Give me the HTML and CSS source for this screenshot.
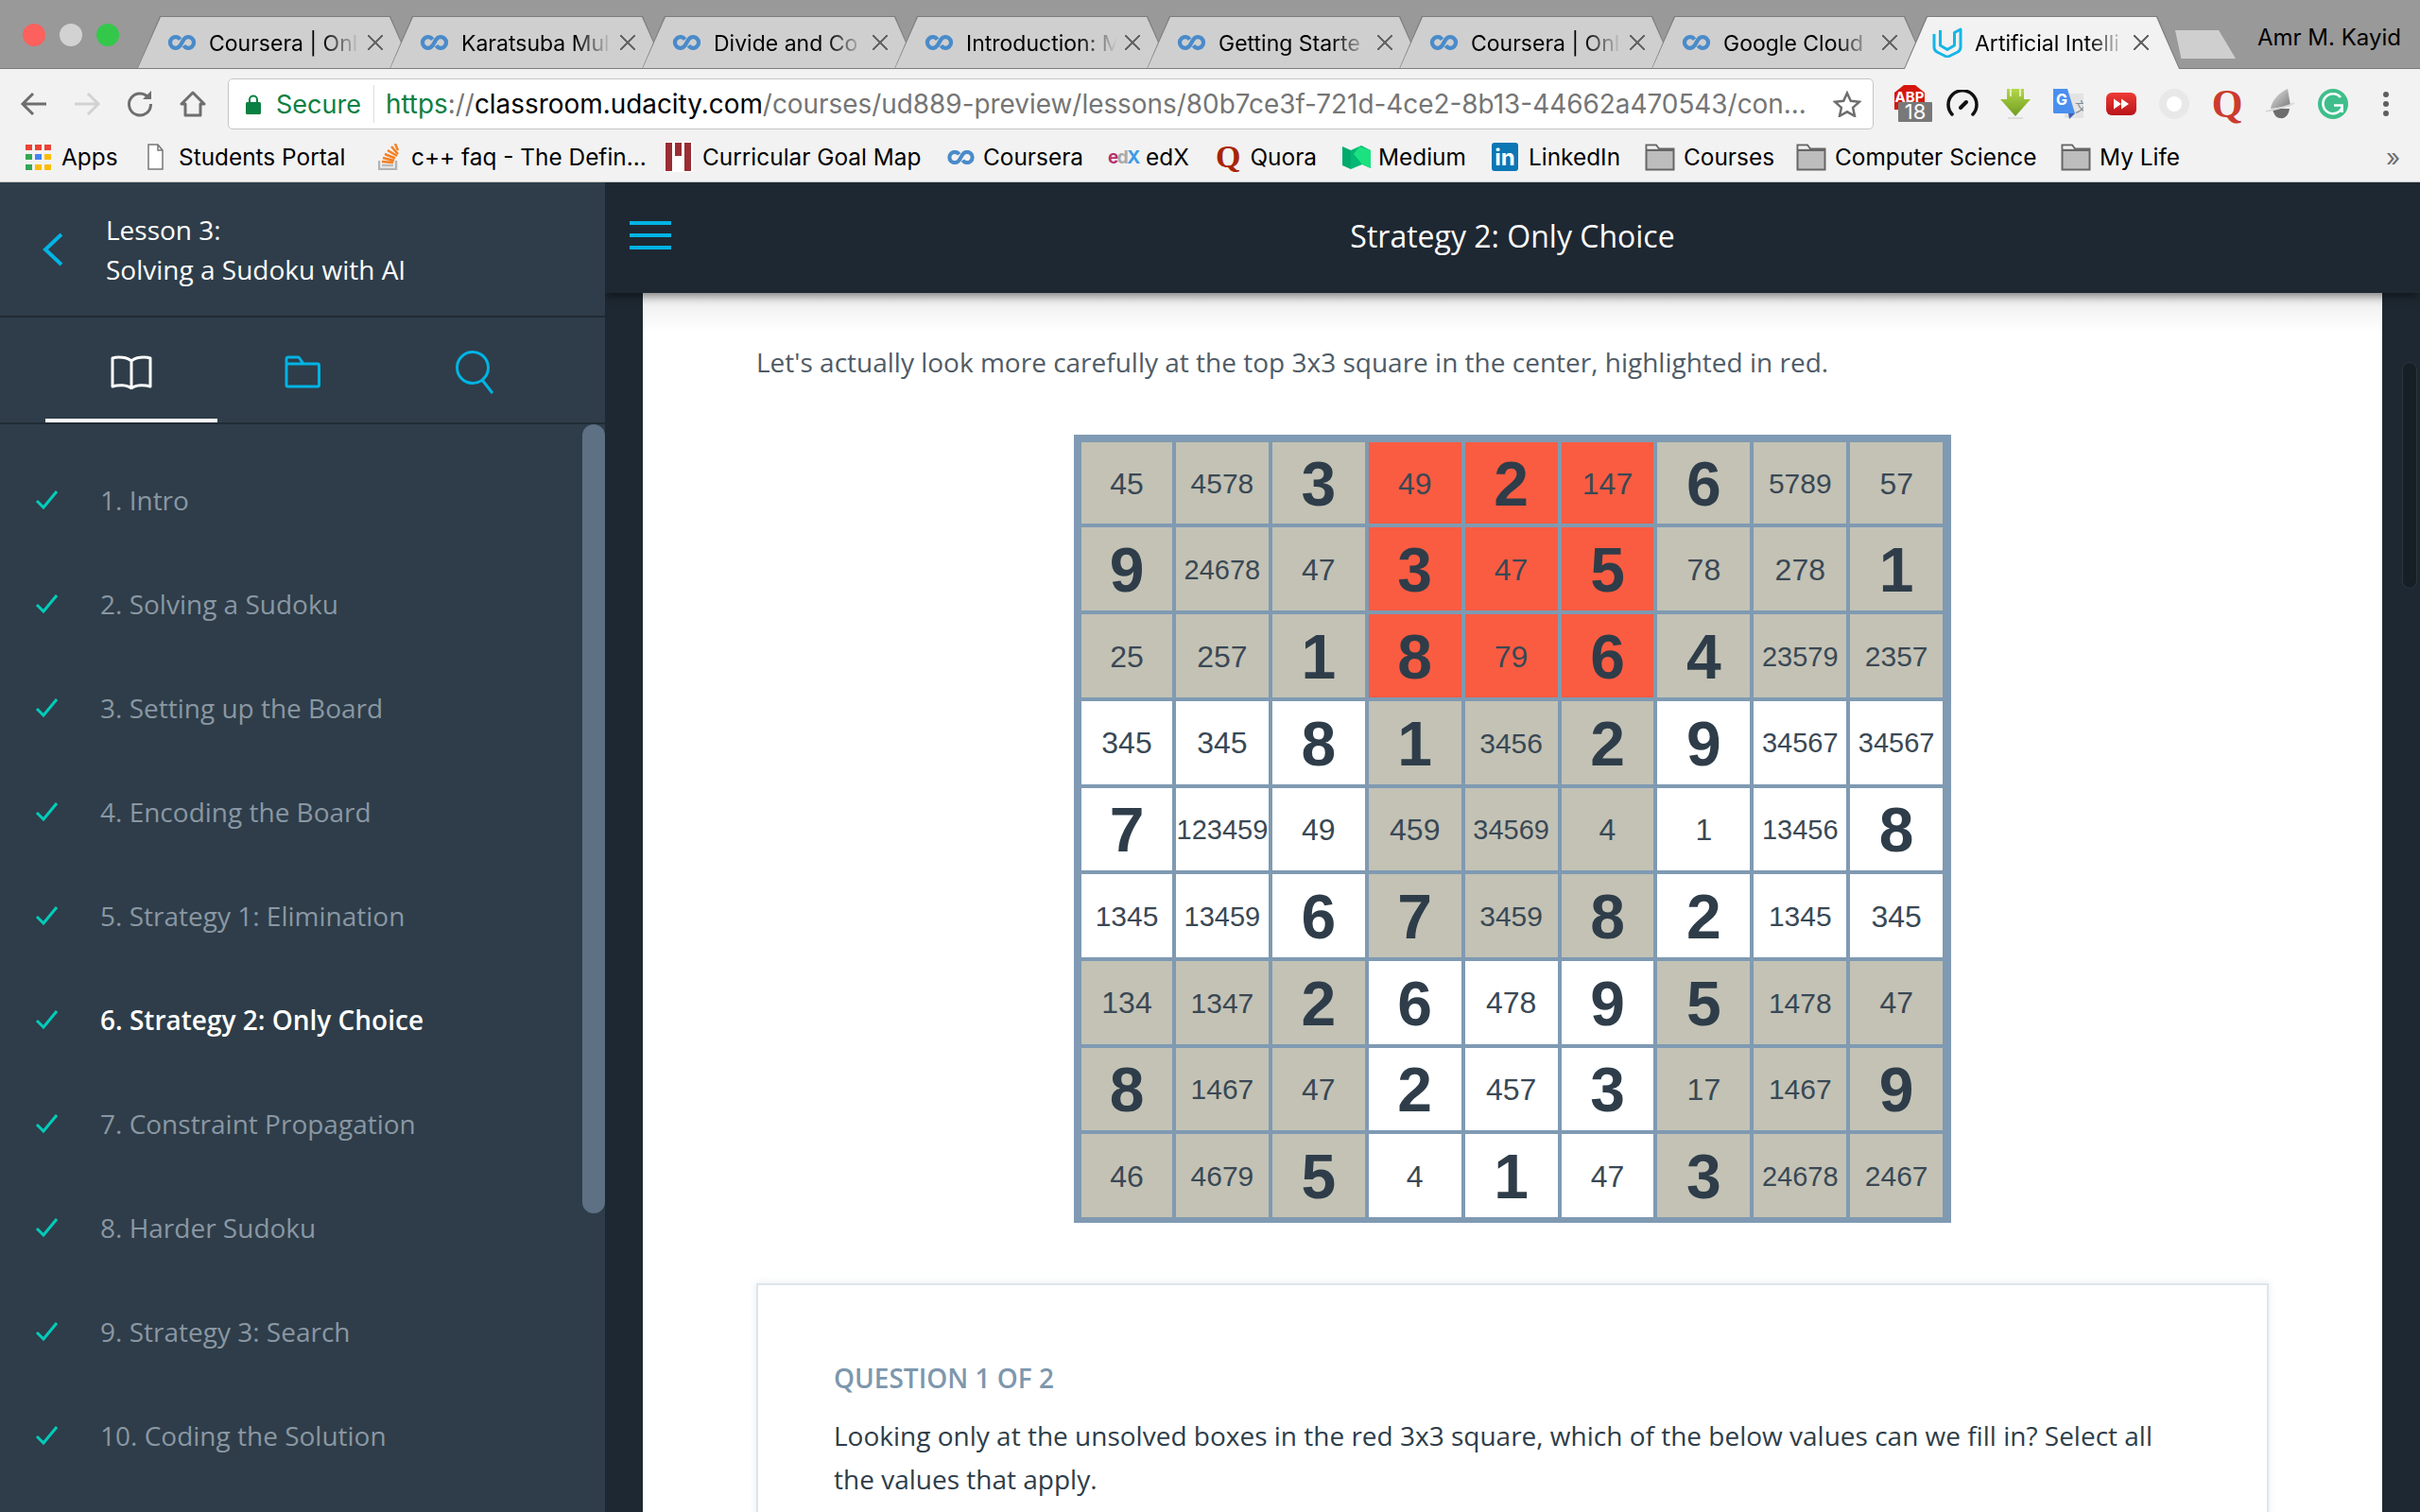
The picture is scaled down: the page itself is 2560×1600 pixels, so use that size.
FILE: index.html
```html
<!DOCTYPE html>
<html>

<head>
    <meta charset="utf-8">
    <title>Strategy 2: Only Choice</title>
    <link rel="stylesheet" href="styles.css">
</head>

<body>
    <svg class="defs" width="0" height="0">
        <symbol id="co" viewBox="0 0 32 16">
            <path d="M14 4.6A6 6 0 1 0 14 11.4L18 4.6A6 6 0 1 1 18 11.4" fill="none" stroke="#4a8bca" stroke-width="4.400"/>
        </symbol>
        <symbol id="bm-folder" viewBox="0 0 32 30">
            <path d="M1.5 28.5V2.5H12L15 6.5H30.500V28.5Z" fill="#bdbdbd" stroke="#666" stroke-width="2"/>
            <path d="M1.500 8H30.500" stroke="#666" stroke-width="2"/>
            <path d="M2.500 3.500H11.500L14 6.500H2.500Z" fill="#f2f2f2"/>
        </symbol>
    </svg>

    <div class="tabstrip">
        <div class="lights">
            <span class="light red"></span>
            <span class="light grey"></span>
            <span class="light green"></span>
        </div>
        <div class="tab"><svg class="tab-icon"><use href="#co"/></svg><span class="tab-title">Coursera | Onl</span><span class="tab-x"></span></div>
        <div class="tab"><svg class="tab-icon"><use href="#co"/></svg><span class="tab-title">Karatsuba Mul</span><span class="tab-x"></span></div>
        <div class="tab"><svg class="tab-icon"><use href="#co"/></svg><span class="tab-title">Divide and Co</span><span class="tab-x"></span></div>
        <div class="tab"><svg class="tab-icon"><use href="#co"/></svg><span class="tab-title">Introduction: M</span><span class="tab-x"></span></div>
        <div class="tab"><svg class="tab-icon"><use href="#co"/></svg><span class="tab-title">Getting Starte</span><span class="tab-x"></span></div>
        <div class="tab"><svg class="tab-icon"><use href="#co"/></svg><span class="tab-title">Coursera | Onl</span><span class="tab-x"></span></div>
        <div class="tab"><svg class="tab-icon"><use href="#co"/></svg><span class="tab-title">Google Cloud</span><span class="tab-x"></span></div>
        <div class="tab active">
            <svg class="tab-icon" viewBox="0 0 32 32">
                <path d="M2 7V21Q2 24 5 26L14 30.500Q16 31.500 18 30.500L27 26Q30 24 30 21V2L23.500 5.500V19L16 23.500L8.500 19V3" fill="none" stroke="#15b6e6" stroke-width="3" stroke-linejoin="round"/>
            </svg>
            <span class="tab-title">Artificial Intelli</span><span class="tab-x"></span>
        </div>
        <div class="new-tab"></div>
        <div class="profile">Amr M. Kayid</div>
    </div>

    <div class="toolbar">
        <div class="nav">
            <svg width="30" height="26" viewBox="0 0 30 26"><path d="M28 13H3M14 2L3 13L14 24" fill="none" stroke="#6e6e6e" stroke-width="3"/></svg>
        </div>
        <div class="nav">
            <svg width="30" height="26" viewBox="0 0 30 26"><path d="M2 13H27M16 2L27 13L16 24" fill="none" stroke="#d2d2d2" stroke-width="3"/></svg>
        </div>
        <div class="nav">
            <svg width="30" height="30" viewBox="0 0 30 30"><path d="M24.500 9A11.500 11.500 0 1 0 26.500 15" fill="none" stroke="#6e6e6e" stroke-width="3"/><path d="M18 10H27V1Z" fill="#6e6e6e"/></svg>
        </div>
        <div class="nav">
            <svg width="28" height="28" viewBox="0 0 28 28"><path d="M14 2L2 14H6V26H22V14H26Z" fill="none" stroke="#6e6e6e" stroke-width="3" stroke-linejoin="round"/></svg>
        </div>
        <div class="omnibox">
            <svg class="lock" width="16" height="21" viewBox="0 0 16 21"><path d="M4 9V5.500A4 4 0 0 1 12 5.500V9" fill="none" stroke="#0b8043" stroke-width="2"/><rect x="0" y="8" width="16" height="13" rx="1.500" fill="#0b8043"/></svg>
            <span class="secure">Secure</span>
            <span class="omni-sep"></span>
            <span class="url"><span class="u-green">https</span><span class="u-grey">://</span><span class="u-black">classroom.udacity.com</span><span class="u-grey">/courses/ud889-preview/lessons/80b7ce3f-721d-4ce2-8b13-44662a470543/con...</span></span>
            <svg class="star" width="30" height="28" viewBox="0 0 30 28"><path d="M15 2.500L18.800 10.800L27.800 11.800L21.100 17.900L23 26.800L15 22.300L7 26.800L8.900 17.900L2.200 11.800L11.200 10.800Z" fill="none" stroke="#6e6e6e" stroke-width="2.500"/></svg>
        </div>
        <div class="exts">
            <div class="ext">
                <svg width="48" height="40" viewBox="0 0 48 40">
                    <path d="M18 0H30L40 8V26H8V8Z" fill="#d5160e"/>
                    <text class="abp-text" x="24" y="18">ABP</text>
                    <rect x="12" y="18" width="36" height="21" rx="1" fill="#787878"/>
                    <text class="badge-text" x="30" y="36">18</text>
                </svg>
            </div>
            <div class="ext">
                <svg width="34" height="30" viewBox="0 0 34 30"><path d="M6 26A15 15 0 1 1 28 26" fill="none" stroke="#111" stroke-width="3.500" stroke-linecap="round"/><path d="M15 19L21 13" stroke="#111" stroke-width="4" stroke-linecap="round"/></svg>
            </div>
            <div class="ext">
                <svg width="32" height="32" viewBox="0 0 32 32">
                    <defs><linearGradient id="dl" x1="0" y1="0" x2="0" y2="1"><stop offset="0" stop-color="#b4d74c"/><stop offset="1" stop-color="#6f9c1f"/></linearGradient></defs>
                    <path d="M7 0H25V11H32L16 29L0 11H7Z" fill="url(#dl)"/>
                    <path d="M11 0V8M21 0V8" stroke="#e4efb8" stroke-width="2"/>
                    <path d="M8 31H24" stroke="#ddd" stroke-width="2"/>
                </svg>
            </div>
            <div class="ext">
                <svg width="32" height="32" viewBox="0 0 32 32">
                    <rect x="12" y="5" width="20" height="26" fill="#e3e3e3"/>
                    <text class="tr-text" x="23" y="24">文</text>
                    <path d="M0 0H15L23 26H1.500Q0 26 0 24.500Z" fill="#4a8fee"/>
                    <path d="M16 26H23L17 32Z" fill="#3f5fb8"/>
                    <text class="g-text" x="9" y="17">G</text>
                </svg>
            </div>
            <div class="ext">
                <svg width="32" height="24" viewBox="0 0 32 24">
                    <defs><linearGradient id="yt" x1="0" y1="0" x2="0" y2="1"><stop offset="0" stop-color="#ef3b36"/><stop offset="1" stop-color="#b9141a"/></linearGradient></defs>
                    <rect width="32" height="24" rx="6" fill="url(#yt)"/>
                    <path d="M8 6.500L16 12L8 17.500ZM16 6.500L24 12L16 17.500Z" fill="#fff"/>
                </svg>
            </div>
            <div class="ext">
                <svg width="32" height="32" viewBox="0 0 32 32"><circle cx="16" cy="16" r="16" fill="#e8e8e8"/><circle cx="16" cy="16" r="8" fill="#fff"/></svg>
            </div>
            <div class="ext"><span class="ext-q">Q</span></div>
            <div class="ext">
                <svg width="32" height="32" viewBox="0 0 32 32">
                    <defs><linearGradient id="cone" x1="0" y1="0" x2="1" y2="1"><stop offset="0" stop-color="#e6e6e6"/><stop offset="1" stop-color="#777"/></linearGradient></defs>
                    <path d="M24 0L27 18L6 21C7 12 15 4 24 0Z" fill="url(#cone)"/>
                    <path d="M8 21H26C25 28 21 32 16 31C12 31 9 27 8 21Z" fill="#6d6d6d"/>
                    <path d="M1 24C8 22 22 20 31 15" fill="none" stroke="#d8d8d8" stroke-width="2"/>
                </svg>
            </div>
            <div class="ext">
                <svg width="32" height="32" viewBox="0 0 32 32">
                    <circle cx="16" cy="16" r="16" fill="#3fbe8b"/>
                    <path d="M24 9A10.500 10.500 0 1 0 25.500 20" fill="none" stroke="#fff" stroke-width="2.600"/>
                    <path d="M17 17.500H25.500V25" fill="none" stroke="#fff" stroke-width="2.600"/>
                </svg>
            </div>
            <div class="ext">
                <svg width="8" height="28" viewBox="0 0 8 28"><circle cx="4" cy="4" r="3" fill="#5f5f5f"/><circle cx="4" cy="14" r="3" fill="#5f5f5f"/><circle cx="4" cy="24" r="3" fill="#5f5f5f"/></svg>
            </div>
        </div>
    </div>

    <div class="bookmarks">
        <div class="bm bm-apps">
            <svg class="bm-icon" width="27" height="27" viewBox="0 0 27 27">
                <rect width="7" height="6" fill="#ea4335"/><rect x="10" width="7" height="6" fill="#ea4335"/><rect x="20" width="7" height="6" fill="#ea4335"/>
                <rect y="10" width="7" height="6" fill="#34a853"/><rect x="10" y="10" width="7" height="6" fill="#4285f4"/><rect x="20" y="10" width="7" height="6" fill="#fbbc05"/>
                <rect y="21" width="7" height="6" fill="#34a853"/><rect x="10" y="21" width="7" height="6" fill="#fbbc05"/><rect x="20" y="21" width="7" height="6" fill="#fbbc05"/>
            </svg>Apps
        </div>
        <div class="bm bm-portal">
            <svg class="bm-icon" width="17" height="28" viewBox="0 0 17 28"><path d="M1 1H11L16 7V27H1ZM11 1V7H16" fill="#fff" stroke="#777" stroke-width="1.500"/></svg>Students Portal
        </div>
        <div class="bm bm-faq">
            <svg class="bm-icon" width="22" height="28" viewBox="0 0 22 28">
                <path d="M1 18V27H19V18" fill="none" stroke="#b3b3b3" stroke-width="2.500"/>
                <path d="M4 23H16" stroke="#bcbbbb" stroke-width="2.500"/>
                <path d="M4 19L16 20M5 15L17 18M7 11L18 15.500M10 7L20 13M14 3L21 11M18 0L21 7" stroke="#f48024" stroke-width="2.500"/>
            </svg>c++ faq - The Defin...
        </div>
        <div class="bm bm-goal">
            <svg class="bm-icon" width="30" height="32" viewBox="0 0 30 32"><rect width="30" height="32" fill="#fff"/><rect x="1" y="1" width="7" height="30" fill="#9a2e34"/><rect x="11" y="1" width="7" height="14" fill="#9a2e34"/><rect x="21" y="1" width="7" height="30" fill="#9a2e34"/></svg>Curricular Goal Map
        </div>
        <div class="bm bm-coursera">
            <svg class="bm-icon" width="31" height="15"><use href="#co"/></svg>Coursera
        </div>
        <div class="bm bm-edx">
            <span class="edx-icon"><span class="edx-e">e</span><span class="edx-d">d</span><span class="edx-x">X</span></span>edX
        </div>
        <div class="bm bm-quora">
            <span class="quora-q">Q</span>Quora
        </div>
        <div class="bm bm-medium">
            <svg class="bm-icon" width="30" height="25" viewBox="0 0 30 25"><path d="M0 1L9 5V25L0 21Z" fill="#00ab6c"/><path d="M9 5L20 0L30 5V24L21 20L9 25Z" fill="#02b875"/><path d="M18 1L30 5V24L21 20L12 9Z" fill="#1be27f"/></svg>Medium
        </div>
        <div class="bm bm-linkedin">
            <span class="in-icon">in</span>LinkedIn
        </div>
        <div class="bm bm-courses">
            <svg class="bm-icon" width="32" height="30"><use href="#bm-folder"/></svg>Courses
        </div>
        <div class="bm bm-cs">
            <svg class="bm-icon" width="32" height="30"><use href="#bm-folder"/></svg>Computer Science
        </div>
        <div class="bm bm-life">
            <svg class="bm-icon" width="32" height="30"><use href="#bm-folder"/></svg>My Life
        </div>
        <div class="bm-more">»</div>
    </div>

    <div class="app">
        <div class="sidebar">
            <div class="side-head">
                <svg class="back" width="22" height="36" viewBox="0 0 22 36"><path d="M20 2L3 18L20 34" fill="none" stroke="#02b3e4" stroke-width="4"/></svg>
                <div class="lesson">
                    <div>Lesson 3:</div>
                    <div>Solving a Sudoku with AI</div>
                </div>
            </div>
            <div class="side-tabs">
                <div class="side-tab on">
                    <svg width="44" height="36" viewBox="0 0 44 36"><path d="M22 6C18 2 8 1 2 3V33C8 31 18 31 22 35C26 31 36 31 42 33V3C36 1 26 2 22 6ZM22 6V35" fill="none" stroke="#fff" stroke-width="3" stroke-linejoin="round"/></svg>
                </div>
                <div class="side-tab">
                    <svg width="38" height="35" viewBox="0 0 38 35"><path d="M2 9V4Q2 2 4 2H15L20 9H35Q36.500 9 36.500 10.500V31.500Q36.500 33 35 33H3.500Q2 33 2 31.500ZM2 9H20" fill="none" stroke="#02b3e4" stroke-width="3" stroke-linejoin="round"/></svg>
                </div>
                <div class="side-tab">
                    <svg width="42" height="46" viewBox="0 0 42 46"><circle cx="19" cy="18" r="16.500" fill="none" stroke="#02b3e4" stroke-width="3"/><path d="M29 31L40 45" stroke="#02b3e4" stroke-width="3"/></svg>
                </div>
            </div>
            <div class="side-list">
                <div class="side-thumb"></div>
                <div class="item"><svg class="check" width="24" height="20" viewBox="0 0 24 20"><path d="M2 11L9 18L23 1" fill="none" stroke="#02ccba" stroke-width="3"/></svg>1. Intro</div>
                <div class="item"><svg class="check" width="24" height="20" viewBox="0 0 24 20"><path d="M2 11L9 18L23 1" fill="none" stroke="#02ccba" stroke-width="3"/></svg>2. Solving a Sudoku</div>
                <div class="item"><svg class="check" width="24" height="20" viewBox="0 0 24 20"><path d="M2 11L9 18L23 1" fill="none" stroke="#02ccba" stroke-width="3"/></svg>3. Setting up the Board</div>
                <div class="item"><svg class="check" width="24" height="20" viewBox="0 0 24 20"><path d="M2 11L9 18L23 1" fill="none" stroke="#02ccba" stroke-width="3"/></svg>4. Encoding the Board</div>
                <div class="item"><svg class="check" width="24" height="20" viewBox="0 0 24 20"><path d="M2 11L9 18L23 1" fill="none" stroke="#02ccba" stroke-width="3"/></svg>5. Strategy 1: Elimination</div>
                <div class="item current"><svg class="check" width="24" height="20" viewBox="0 0 24 20"><path d="M2 11L9 18L23 1" fill="none" stroke="#02ccba" stroke-width="3"/></svg>6. Strategy 2: Only Choice</div>
                <div class="item"><svg class="check" width="24" height="20" viewBox="0 0 24 20"><path d="M2 11L9 18L23 1" fill="none" stroke="#02ccba" stroke-width="3"/></svg>7. Constraint Propagation</div>
                <div class="item"><svg class="check" width="24" height="20" viewBox="0 0 24 20"><path d="M2 11L9 18L23 1" fill="none" stroke="#02ccba" stroke-width="3"/></svg>8. Harder Sudoku</div>
                <div class="item"><svg class="check" width="24" height="20" viewBox="0 0 24 20"><path d="M2 11L9 18L23 1" fill="none" stroke="#02ccba" stroke-width="3"/></svg>9. Strategy 3: Search</div>
                <div class="item"><svg class="check" width="24" height="20" viewBox="0 0 24 20"><path d="M2 11L9 18L23 1" fill="none" stroke="#02ccba" stroke-width="3"/></svg>10. Coding the Solution</div>
            </div>
        </div>

        <div class="main">
            <div class="topbar">
                <div class="burger"><span></span><span></span><span></span></div>
                <div class="top-title">Strategy 2: Only Choice</div>
            </div>
            <div class="page-thumb"></div>
            <div class="page">
                <p class="intro">Let's actually look more carefully at the top 3x3 square in the center, highlighted in red.</p>
                <div class="board">
                    <div class="cell tan">45</div><div class="cell tan n4">4578</div><div class="cell tan big">3</div><div class="cell red">49</div><div class="cell red big">2</div><div class="cell red">147</div><div class="cell tan big">6</div><div class="cell tan n4">5789</div><div class="cell tan">57</div>
                    <div class="cell tan big">9</div><div class="cell tan n5">24678</div><div class="cell tan">47</div><div class="cell red big">3</div><div class="cell red">47</div><div class="cell red big">5</div><div class="cell tan">78</div><div class="cell tan">278</div><div class="cell tan big">1</div>
                    <div class="cell tan">25</div><div class="cell tan">257</div><div class="cell tan big">1</div><div class="cell red big">8</div><div class="cell red">79</div><div class="cell red big">6</div><div class="cell tan big">4</div><div class="cell tan n5">23579</div><div class="cell tan n4">2357</div>
                    <div class="cell">345</div><div class="cell">345</div><div class="cell big">8</div><div class="cell tan big">1</div><div class="cell tan n4">3456</div><div class="cell tan big">2</div><div class="cell big">9</div><div class="cell n5">34567</div><div class="cell n5">34567</div>
                    <div class="cell big">7</div><div class="cell n5">123459</div><div class="cell">49</div><div class="cell tan">459</div><div class="cell tan n5">34569</div><div class="cell tan">4</div><div class="cell">1</div><div class="cell n5">13456</div><div class="cell big">8</div>
                    <div class="cell n4">1345</div><div class="cell n5">13459</div><div class="cell big">6</div><div class="cell tan big">7</div><div class="cell tan n4">3459</div><div class="cell tan big">8</div><div class="cell big">2</div><div class="cell n4">1345</div><div class="cell">345</div>
                    <div class="cell tan">134</div><div class="cell tan n4">1347</div><div class="cell tan big">2</div><div class="cell big">6</div><div class="cell">478</div><div class="cell big">9</div><div class="cell tan big">5</div><div class="cell tan n4">1478</div><div class="cell tan">47</div>
                    <div class="cell tan big">8</div><div class="cell tan n4">1467</div><div class="cell tan">47</div><div class="cell big">2</div><div class="cell">457</div><div class="cell big">3</div><div class="cell tan">17</div><div class="cell tan n4">1467</div><div class="cell tan big">9</div>
                    <div class="cell tan">46</div><div class="cell tan n4">4679</div><div class="cell tan big">5</div><div class="cell">4</div><div class="cell big">1</div><div class="cell">47</div><div class="cell tan big">3</div><div class="cell tan n5">24678</div><div class="cell tan n4">2467</div>
                </div>
                <div class="card">
                    <div class="q-label">QUESTION 1 OF 2</div>
                    <p class="q-text">Looking only at the unsolved boxes in the red 3x3 square, which of the below values can we fill in? Select all the values that apply.</p>
                </div>
            </div>
        </div>
    </div>
</body>

</html>
```

FILE: styles.css
```css
html, body {
    margin: 0;
    height: 1600px;
    overflow: hidden;
}
body {
    width: 2560px;
    font-family: Inter, 'Liberation Sans', Arial, sans-serif;
    background: #1e2832;
}
.defs {
    display: block;
    height: 0;
}

/* browser chrome */
.tabstrip {
    height: 72px;
    background: #999;
    border-bottom: 1px solid #7b7b7b;
    padding: 0 0 0 145px;
    display: flex;
    align-items: flex-end;
    position: relative;
}
.lights {
    position: absolute;
    left: 24px;
    top: 25px;
    display: flex;
    gap: 15px;
}
.light {
    width: 24px;
    height: 24px;
    border-radius: 50%;
}
.red { background: #fc615d; }
.light.grey { background: #d2d2d2; }
.green { background: #34c84a; }
.tab {
    position: relative;
    width: 292px;
    height: 56px;
    margin-right: -25px;
    margin-bottom: -1px;
    padding-left: 32px;
    box-sizing: border-box;
    display: flex;
    align-items: center;
    background: #7d7d7d;
    clip-path: polygon(0 100%, 24px 0, calc(100% - 24px) 0, 100% 100%);
}
.tab::before {
    content: "";
    position: absolute;
    left: 1px;
    right: 1px;
    top: 1px;
    bottom: 1px;
    background: #cfcfcf;
    clip-path: polygon(0 100%, 24px 0, calc(100% - 24px) 0, 100% 100%);
}
.tab > * {
    position: relative;
}
.tab.active {
    z-index: 2;
    padding-left: 30px;
}
.tab.active::before {
    background: #f2f2f2;
    bottom: 0;
}
.tab-icon {
    width: 31px;
    height: 16px;
    flex: none;
}
.active .tab-icon {
    width: 32px;
    height: 32px;
}
.tab-title {
    width: 166px;
    margin: 2px 0 0 13px;
    font-size: 23px;
    color: #000;
    white-space: nowrap;
    overflow: hidden;
    -webkit-mask-image: linear-gradient(to right, #000 72%, transparent 96%);
    mask-image: linear-gradient(to right, #000 72%, transparent 96%);
}
.tab-x {
    width: 16px;
    height: 16px;
    margin-left: 2px;
    background:
        linear-gradient(45deg, transparent 46%, #666 46%, #666 54%, transparent 54%),
        linear-gradient(-45deg, transparent 46%, #666 46%, #666 54%, transparent 54%);
}
.new-tab {
    width: 64px;
    height: 30px;
    margin: 0 0 10px 20px;
    background: #cfcfcf;
    clip-path: polygon(10% 100%, 0 0, 72% 0, 100% 100%);
}
.profile {
    position: absolute;
    left: 2388px;
    top: 25px;
    font-size: 24px;
    color: #000;
}

.toolbar {
    height: 66px;
    padding-top: 4px;
    background: #f2f2f2;
    padding-left: 8px;
    display: flex;
    align-items: center;
}
.nav {
    width: 56px;
    display: flex;
    justify-content: center;
}
.omnibox {
    width: 1741px;
    height: 54px;
    box-sizing: border-box;
    margin-left: 9px;
    padding-left: 18px;
    background: #fff;
    border: 1px solid #c6c6c6;
    border-radius: 5px;
    display: flex;
    align-items: center;
    flex: none;
}
.secure {
    margin-left: 16px;
    font-size: 27px;
    color: #0b8043;
}
.omni-sep {
    width: 1px;
    height: 40px;
    margin: 0 12px 0 13px;
    background: #ddd;
}
.url {
    flex: 1;
    font-size: 27.900px;
    white-space: nowrap;
}
.u-green { color: #0b8043; }
.u-grey { color: #757575; }
.u-black { color: #000; }
.star {
    margin: 0 12px 0 2px;
    flex: none;
}
.exts {
    margin-left: 10px;
    display: flex;
}
.ext {
    width: 56px;
    height: 40px;
    display: flex;
    align-items: center;
    justify-content: center;
}
.abp-text {
    font-size: 15px;
    font-weight: bold;
    fill: #fff;
    text-anchor: middle;
}
.badge-text {
    font-size: 22px;
    fill: #fff;
    text-anchor: middle;
}
.tr-text {
    font-family: 'Noto Sans CJK SC', sans-serif;
    font-size: 14px;
    fill: #7d8c96;
}
.g-text {
    font-size: 16px;
    font-weight: bold;
    fill: #fff;
    text-anchor: middle;
}
.ext-q {
    font-family: 'Liberation Serif', serif;
    font-weight: bold;
    font-size: 42px;
    line-height: 40px;
    color: #cb3b2e;
}

.bookmarks {
    height: 46px;
    padding-bottom: 3px;
    background: #f2f2f2;
    border-bottom: 1px solid #c4c4c4;
    padding-left: 27px;
    display: grid;
    grid-template-columns: 129px 244px 303px 298px 171px 114px 134px 158px 162px 160px 280px 1fr;
    align-items: center;
    font-size: 24.400px;
    color: #000;
    position: relative;
}
.bm {
    display: flex;
    align-items: center;
    gap: 9px;
    white-space: nowrap;
}
.bm-apps { gap: 11px; }
.bm-portal { gap: 16px; }
.bm-faq { gap: 13px; }
.bm-goal { gap: 10px; }
.bm-coursera, .bm-edx, .bm-medium { gap: 8px; }
.bm-quora { gap: 10px; }
.bm-linkedin { gap: 11px; }
.edx-icon {
    font-size: 19px;
    font-weight: bold;
    letter-spacing: -1.500px;
    width: 32px;
}
.edx-e { color: #b5326e; }
.edx-d { color: #aaa; }
.edx-x { color: #3d9be9; }
.quora-q {
    font-family: 'Liberation Serif', serif;
    font-weight: bold;
    font-size: 34px;
    line-height: 30px;
    color: #a82400;
}
.in-icon {
    width: 28px;
    height: 30px;
    background: #0b77b5;
    border-radius: 3px;
    color: #fff;
    font-weight: bold;
    font-size: 24px;
    line-height: 32px;
    text-align: center;
}
.bm-more {
    position: absolute;
    left: 2524px;
    top: 8px;
    font-size: 26px;
    color: #6e6e6e;
}

/* classroom */
.app {
    display: grid;
    grid-template-columns: 640px 1fr;
    height: 1407px;
    font-family: 'Open Sans', sans-serif;
}
.sidebar {
    background: #2e3d49;
    overflow: hidden;
}
.side-head {
    height: 141px;
    padding-left: 45px;
    display: flex;
    align-items: center;
    border-bottom: 2px solid #212c36;
    box-sizing: content-box;
}
.back {
    flex: none;
}
.lesson {
    margin-left: 45px;
    font-size: 28px;
    line-height: 42px;
    color: #fff;
}
.side-tabs {
    height: 111px;
    padding-left: 48px;
    display: flex;
    border-bottom: 2px solid #212c36;
}
.side-tab {
    width: 181.500px;
    display: flex;
    align-items: center;
    justify-content: center;
    padding: 8px 0 4px;
    box-sizing: border-box;
}
.side-tab.on {
    border-bottom: 4px solid #fff;
    padding-bottom: 0;
}
.side-list {
    position: relative;
    padding-top: 25px;
}
.side-thumb {
    position: absolute;
    right: 0;
    top: 0;
    width: 24px;
    height: 835px;
    background: #5d7084;
    border-radius: 12px;
}
.item {
    height: 110px;
    padding-left: 37px;
    display: flex;
    align-items: center;
    font-size: 28px;
    color: #8a97a3;
}
.check {
    margin-right: 45px;
    flex: none;
}
.item.current {
    color: #fff;
    font-weight: 600;
}

.main {
    position: relative;
    background: #1e2832;
    overflow: hidden;
}
.topbar {
    position: relative;
    z-index: 2;
    height: 112px;
    padding-bottom: 5px;
    background: #1e2832;
    box-shadow: 0 3px 10px rgba(0, 0, 0, 0.5);
    display: flex;
    align-items: center;
    justify-content: center;
}
.burger {
    position: absolute;
    left: 26px;
    top: 41px;
    width: 44px;
}
.burger span {
    display: block;
    height: 4px;
    margin-bottom: 9px;
    background: #02b3e4;
}
.top-title {
    font-size: 32px;
    color: #fff;
}
.page-thumb {
    position: absolute;
    left: 1901px;
    top: 190px;
    width: 14px;
    height: 238px;
    background: #171f26;
    border: 1px solid #2b353f;
    border-radius: 8px;
}
.page {
    margin: 0 40px;
    height: 1290px;
    padding: 50px 120px 0;
    box-sizing: border-box;
    background: linear-gradient(#ececec, #fff 42px);
}
.intro {
    margin: 0 0 54px;
    font-size: 28px;
    line-height: 46px;
    color: #4f5b66;
}
.board {
    width: 928px;
    height: 834px;
    box-sizing: border-box;
    margin: 0 auto 64px;
    border: 8px solid #7f9ab2;
    border-bottom-width: 7px;
    background: #7f9ab2;
    display: grid;
    grid-template-columns: 96px repeat(8, 97.900px);
    grid-template-rows: 86px 88px 88px repeat(6, 87.670px);
    gap: 4px;
    font-family: 'Liberation Sans', Arial, sans-serif;
}
.cell {
    background: #fff;
    color: #3a4854;
    font-size: 32px;
    padding-top: 2px;
    box-sizing: border-box;
    display: flex;
    align-items: center;
    justify-content: center;
    white-space: nowrap;
}
.cell.tan { background: #c3c2b5; }
.cell.red { background: #fa5c42; }
.cell.n4 { font-size: 30px; }
.cell.n5 { font-size: 29px; }
.cell.big {
    font-size: 66px;
    font-weight: bold;
    color: #2e3d49;
}
.card {
    padding: 78px 80px 0;
    height: 400px;
    background: #fff;
    border: 2px solid #dfe5ea;
    box-shadow: 0 0 8px rgba(125, 151, 173, 0.2);
}
.q-label {
    font-size: 28px;
    line-height: 40px;
    font-weight: 600;
    color: #7d97ad;
}
.q-text {
    margin: 18px 0 0;
    font-size: 28px;
    line-height: 46px;
    color: #2e3d49;
}
```
